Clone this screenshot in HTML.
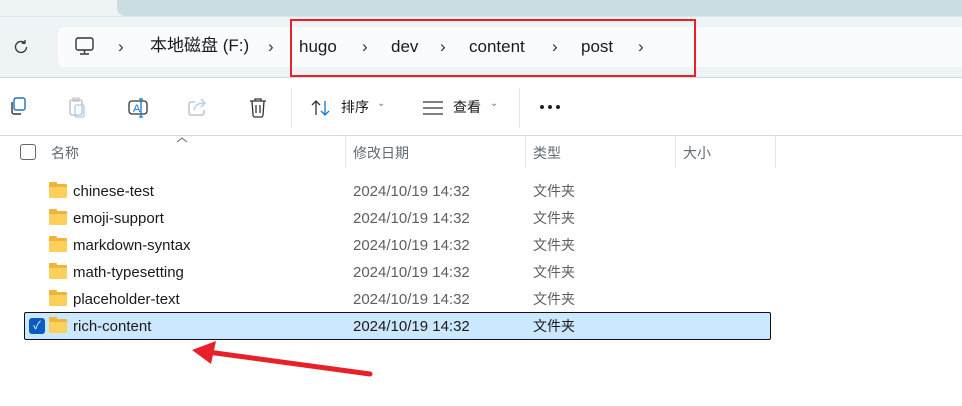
<!DOCTYPE html>
<html><head><meta charset="utf-8"><style>
*{margin:0;padding:0;box-sizing:border-box}
body{width:962px;height:406px;overflow:hidden;background:#fff;font-family:"Liberation Sans","Noto Sans CJK SC",sans-serif;position:relative;color:#1a1a1a}
.a{position:absolute}
.row{position:absolute;left:0;height:27px;width:962px;font-size:15px;line-height:27px}
.row .n{position:absolute;left:73px;top:0;color:#1a1a1a}
.row .d{position:absolute;left:353px;top:0;color:#5f5f5f}
.row .t{position:absolute;left:533px;top:0;color:#5f5f5f;font-size:14px;line-height:26px}
.fold{position:absolute;left:49px;top:6px;width:18px;height:14px;background:#fcd05a;border-radius:1px;border-top:3px solid #f0b43a}
.fold:before{content:"";position:absolute;left:0;top:-5px;width:8px;height:3px;background:#f0b43a;border-radius:1px 1px 0 0}
.sep{position:absolute;top:135px;height:33px;width:1px;background:#e5e5e5}
.hd{position:absolute;top:142px;font-size:14px;line-height:22px;color:#5f6b75}
.crumb{position:absolute;top:36px;font-size:17px;line-height:22px;height:22px;color:#1a1a1a}
.chev{position:absolute;top:36px;font-size:17px;line-height:22px;color:#333}
</style></head><body>
<div class="a" style="left:0;top:0;width:962px;height:77px;background:#eef3f6"></div>
<div class="a" style="left:117px;top:0;width:845px;height:16px;background:#cbdde3;border-radius:0 0 0 8px"></div>
<div class="a" style="left:0;top:16px;width:962px;height:1px;background:#dde6ea"></div>
<div class="a" style="left:58px;top:27px;width:904px;height:40px;background:#f9fbfc;border-radius:6px 0 0 6px"></div>
<div class="a" style="left:0;top:77px;width:962px;height:1px;background:#d5dadd"></div>
<svg class="a" style="left:12px;top:38px" width="18" height="18" viewBox="0 0 18 18"><path d="M14.5 9a5.5 5.5 0 1 1-1.8-4.1M13 2v3.2h-3.2" fill="none" stroke="#333" stroke-width="1.3"/></svg>
<svg class="a" style="left:74px;top:36px" width="22" height="20" viewBox="0 0 22 20"><rect x="2" y="2" width="17" height="12" rx="2" fill="none" stroke="#333" stroke-width="1.4"/><path d="M10.5 14v3M6 18h9" stroke="#333" stroke-width="1.4"/></svg>
<span class="chev" style="left:118px">›</span>
<span class="crumb" style="left:150px;top:35px">本地磁盘 (F:)</span>
<span class="chev" style="left:268px">›</span>
<span class="crumb" style="left:299px">hugo</span>
<span class="chev" style="left:362px">›</span>
<span class="crumb" style="left:391px">dev</span>
<span class="chev" style="left:440px">›</span>
<span class="crumb" style="left:469px">content</span>
<span class="chev" style="left:552px">›</span>
<span class="crumb" style="left:581px">post</span>
<span class="chev" style="left:638px">›</span>
<div class="a" style="left:290px;top:19px;width:406px;height:58px;border:2px solid #e8202a"></div>
<svg class="a" style="left:8px;top:97px" width="20" height="20"><rect x="6" y="1" width="11" height="12" rx="2" fill="none" stroke="#1a73c8" stroke-width="1.4"/><path d="M4 5v10a2 2 0 0 0 2 2h7" fill="none" stroke="#333" stroke-width="1.4"/></svg>
<svg class="a" style="left:68px;top:97px" width="20" height="22"><rect x="2" y="3" width="12" height="15" rx="2" fill="none" stroke="#bbb" stroke-width="1.3"/><rect x="7" y="8" width="9" height="12" rx="1.5" fill="none" stroke="#a8cdee" stroke-width="1.3"/><rect x="5" y="1" width="6" height="3" fill="none" stroke="#bbb"/></svg>
<svg class="a" style="left:127px;top:97px" width="24" height="22"><rect x="2" y="4" width="18" height="13" rx="3" fill="none" stroke="#333" stroke-width="1.3"/><text x="6" y="15" font-size="11" fill="#1a73c8" font-family="Liberation Sans">A</text><path d="M14 2v18M12 2h4M12 20h4" stroke="#1a73c8" stroke-width="1.3"/></svg>
<svg class="a" style="left:187px;top:97px" width="22" height="20"><path d="M8 5H4a2 2 0 0 0-2 2v9a2 2 0 0 0 2 2h11a2 2 0 0 0 2-2v-3" fill="none" stroke="#bbb" stroke-width="1.3"/><path d="M7 13c1-5 5-7 10-7M14 2l4 4-4 4" fill="none" stroke="#a8cdee" stroke-width="1.3"/></svg>
<svg class="a" style="left:248px;top:97px" width="20" height="22"><path d="M2 4h16M7 4V2h6v2M4 4l1 14a2 2 0 0 0 2 2h6a2 2 0 0 0 2-2l1-14M8 8v8M12 8v8" fill="none" stroke="#333" stroke-width="1.3"/></svg>
<div class="a" style="left:291px;top:88px;width:1px;height:40px;background:#e5e5e5"></div>
<svg class="a" style="left:310px;top:99px" width="22" height="18"><path d="M6 16V2M2 6l4-4 4 4" fill="none" stroke="#333" stroke-width="1.3"/><path d="M15 2v14M11 12l4 4 4-4" fill="none" stroke="#1a73c8" stroke-width="1.3"/></svg>
<span class="a" style="left:341px;top:97px;font-size:14px;line-height:20px">排序</span><span class="a" style="left:377px;top:98px;font-size:10px;color:#777">⌄</span>
<svg class="a" style="left:423px;top:101px" width="20" height="14"><path d="M0 1h20M0 7h20M0 13h20" stroke="#333" stroke-width="1.3"/></svg>
<span class="a" style="left:453px;top:97px;font-size:14px;line-height:20px">查看</span><span class="a" style="left:490px;top:98px;font-size:10px;color:#777">⌄</span>
<div class="a" style="left:519px;top:88px;width:1px;height:40px;background:#e5e5e5"></div>
<svg class="a" style="left:539px;top:104px" width="22" height="6"><circle cx="3" cy="3" r="2" fill="#222"/><circle cx="11" cy="3" r="2" fill="#222"/><circle cx="19" cy="3" r="2" fill="#222"/></svg>
<div class="a" style="left:0;top:135px;width:962px;height:1px;background:#d5dadd"></div>
<div class="a" style="left:20px;top:144px;width:16px;height:16px;border:1px solid #666;border-radius:3px"></div>
<svg class="a" style="left:176px;top:136px" width="12" height="7"><path d="M1 6l5-4 5 4" fill="none" stroke="#666"/></svg>
<span class="hd" style="left:51px">名称</span>
<div class="sep" style="left:345px"></div><span class="hd" style="left:353px">修改日期</span>
<div class="sep" style="left:525px"></div><span class="hd" style="left:533px">类型</span>
<div class="sep" style="left:675px"></div><span class="hd" style="left:683px">大小</span>
<div class="sep" style="left:775px"></div>
<div class="row" style="top:178px"><div class="fold"></div><span class="n">chinese-test</span><span class="d">2024/10/19 14:32</span><span class="t">文件夹</span></div>
<div class="row" style="top:205px"><div class="fold"></div><span class="n">emoji-support</span><span class="d">2024/10/19 14:32</span><span class="t">文件夹</span></div>
<div class="row" style="top:232px"><div class="fold"></div><span class="n">markdown-syntax</span><span class="d">2024/10/19 14:32</span><span class="t">文件夹</span></div>
<div class="row" style="top:259px"><div class="fold"></div><span class="n">math-typesetting</span><span class="d">2024/10/19 14:32</span><span class="t">文件夹</span></div>
<div class="row" style="top:286px"><div class="fold"></div><span class="n">placeholder-text</span><span class="d">2024/10/19 14:32</span><span class="t">文件夹</span></div>
<div class="a" style="left:24px;top:312px;width:747px;height:28px;background:#cce8ff;border:1px solid #111;border-radius:2px"></div>
<div class="row" style="top:313px"><div class="a" style="left:29px;top:5px;width:16px;height:16px;background:#0a5cc2;border-radius:3px;color:#fff;font-size:11px;text-align:center;line-height:16px">✓</div><div class="fold"></div><span class="n">rich-content</span><span class="d" style="color:#1a1a1a">2024/10/19 14:32</span><span class="t" style="color:#1a1a1a">文件夹</span></div>
<svg class="a" style="left:0;top:0" width="962" height="406"><path d="M370 374L208 352" stroke="#e8202a" stroke-width="5" stroke-linecap="round"/><path d="M192 350L216 341L211 364Z" fill="#e8202a"/></svg>
</body></html>
